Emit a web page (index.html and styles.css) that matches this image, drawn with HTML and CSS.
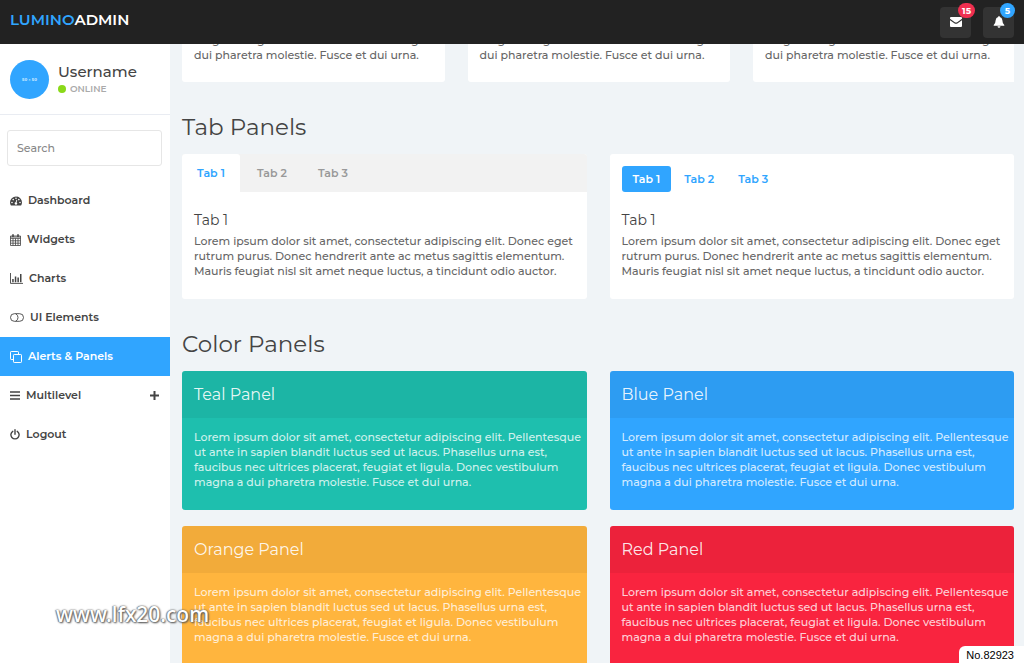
FILE: index.html
```html
<!DOCTYPE html>
<html lang="en">
<head>
  <meta charset="UTF-8">
  <meta name="viewport" content="width=device-width, initial-scale=1">
  <title>Lumino - Panels</title>
  <link rel="stylesheet" href="styles.css">
</head>
<body>

  <header class="navbar">
    <a class="brand" href="#"><span>LUMINO</span>ADMIN</a>
    <div class="nav-buttons">
      <button class="nav-btn" type="button" aria-label="Messages">
        <svg width="12" height="10" viewBox="0 0 12 10"><path fill="#fff" d="M1 0h10a1 1 0 0 1 1 1v.8L7.2 5.2q-1.2.8-2.4 0L0 1.800V1a1 1 0 0 1 1-1zM0 3.200l4.300 3q1.700 1 3.400 0l4.300-3V9a1 1 0 0 1-1 1H1a1 1 0 0 1-1-1z"/></svg>
        <span class="badge badge-red">15</span>
      </button>
      <button class="nav-btn" type="button" aria-label="Alerts">
        <svg width="12" height="12" viewBox="0 0 12 12"><path fill="#fff" d="M6 0q.8 0 .8.9 2.300.5 2.500 3.200.1 3.400 2 4.800v.8H.7v-.8q1.900-1.400 2-4.800Q2.900 1.400 5.200.9 5.200 0 6 0zM4.500 10.200h3Q7.300 11.700 6 11.700T4.500 10.200z"/></svg>
        <span class="badge badge-blue">5</span>
      </button>
    </div>
  </header>

  <div class="page">
    <aside class="sidebar">
      <div class="profile">
        <div class="avatar">50 × 50</div>
        <div>
          <div class="username">Username</div>
          <div class="status"><span class="dot"></span>ONLINE</div>
        </div>
      </div>
      <form class="search">
        <input type="text" placeholder="Search" aria-label="Search">
      </form>
      <nav class="menu">
        <a href="#">
          <svg width="12" height="10" viewBox="0 0 12 10"><path fill="currentColor" fill-rule="evenodd" d="M6 .5a6 6 0 0 1 6 6q0 1.700-.9 3H.9Q0 8.200 0 6.500a6 6 0 0 1 6-6zM1.200 6.500a.8.8 0 1 0 1.600 0a.8.8 0 1 0-1.600 0zM2.400 3.600a.8.8 0 1 0 1.600 0a.8.8 0 1 0-1.600 0zM5.200 2.300a.8.8 0 1 0 1.600 0a.8.8 0 1 0-1.600 0zM8 3.600a.8.8 0 1 0 1.600 0a.8.8 0 1 0-1.600 0zM9.200 6.500a.8.8 0 1 0 1.600 0a.8.8 0 1 0-1.600 0zM6.400 3.800L5.700 6.300a1.200 1.200 0 1 0 .9.200l.6-2.500z"/></svg>
          Dashboard
        </a>
        <a href="#">
          <svg width="11" height="12" viewBox="0 0 11 12"><g fill="none" stroke="currentColor" stroke-width=".8"><path d="M.5 2h10v9.500H.5zM.5 4.400h10M.5 6.800h10M.5 9.200h10M3 4.400v7M5.500 4.400v7M8 4.400v7"/><path stroke-width="1.600" d="M3 .3v2.700M8 .3v2.700"/><path d="M.5 3h10"/></g></svg>
          Widgets
        </a>
        <a href="#">
          <svg width="13" height="11" viewBox="0 0 13 11"><path fill="none" stroke="currentColor" stroke-width=".9" d="M.5 0v10.400H13"/><path fill="currentColor" d="M2.200 6h1.500v3.200H2.200zM4.800 3.500h1.500v5.700H4.800zM7.400 4.600h1.500v4.600H7.400zM10 1h1.500v8.200H10z"/></svg>
          Charts
        </a>
        <a href="#">
          <svg width="14" height="9" viewBox="0 0 14 9"><g fill="none" stroke="currentColor" stroke-width=".9"><rect x=".5" y=".7" width="13" height="7.600" rx="3.800"/><path d="M5.800.9Q8 2 8 4.500T5.800 8.100"/></g></svg>
          UI Elements
        </a>
        <a class="active" href="#">
          <svg width="12" height="12" viewBox="0 0 12 12"><g fill="none" stroke="currentColor"><rect x="3.500" y="3.500" width="8" height="8" rx=".7"/><path d="M3.500 8.500H1.200q-.7 0-.7-.7V1.200q0-.7.7-.7h6.600q.7 0 .7.700v2.300"/></g></svg>
          Alerts &amp; Panels
        </a>
        <a href="#">
          <svg width="10" height="9" viewBox="0 0 10 9"><path stroke="currentColor" stroke-width="1.500" d="M0 1h10M0 4.500h10M0 8h10"/></svg>
          Multilevel
          <svg class="plus" width="9" height="9" viewBox="0 0 9 9"><path stroke="currentColor" stroke-width="2" d="M4.500 0v9M0 4.500h9"/></svg>
        </a>
        <a href="#">
          <svg width="10" height="11" viewBox="0 0 10 11"><path fill="none" stroke="currentColor" stroke-width="1.400" stroke-linecap="round" d="M2.800 2.300a4.100 4.100 0 1 0 4.400 0M5 .8v4.400"/></svg>
          Logout
        </a>
      </nav>
    </aside>

    <main class="content">
      <div class="row row-three">
        <section class="card">
          <p>feugiat et ligula. Donec vestibulum magna<br>dui pharetra molestie. Fusce et dui urna.</p>
        </section>
        <section class="card">
          <p>feugiat et ligula. Donec vestibulum magna<br>dui pharetra molestie. Fusce et dui urna.</p>
        </section>
        <section class="card">
          <p>feugiat et ligula. Donec vestibulum magna<br>dui pharetra molestie. Fusce et dui urna.</p>
        </section>
      </div>

      <h2>Tab Panels</h2>
      <div class="row row-two">
        <section class="card tab-card">
          <div class="tabs">
            <button class="active" type="button">Tab 1</button>
            <button type="button">Tab 2</button>
            <button type="button">Tab 3</button>
          </div>
          <h4>Tab 1</h4>
          <p>Lorem ipsum dolor sit amet, consectetur adipiscing elit. Donec eget<br>rutrum purus. Donec hendrerit ante ac metus sagittis elementum.<br>Mauris feugiat nisl sit amet neque luctus, a tincidunt odio auctor.</p>
        </section>
        <section class="card tab-card">
          <div class="pills">
            <button class="active" type="button">Tab 1</button>
            <button type="button">Tab 2</button>
            <button type="button">Tab 3</button>
          </div>
          <h4>Tab 1</h4>
          <p>Lorem ipsum dolor sit amet, consectetur adipiscing elit. Donec eget<br>rutrum purus. Donec hendrerit ante ac metus sagittis elementum.<br>Mauris feugiat nisl sit amet neque luctus, a tincidunt odio auctor.</p>
        </section>
      </div>

      <h2>Color Panels</h2>
      <div class="row row-two">
        <section class="panel teal">
          <h3>Teal Panel</h3>
          <p>Lorem ipsum dolor sit amet, consectetur adipiscing elit. Pellentesque<br>ut ante in sapien blandit luctus sed ut lacus. Phasellus urna est,<br>faucibus nec ultrices placerat, feugiat et ligula. Donec vestibulum<br>magna a dui pharetra molestie. Fusce et dui urna.</p>
        </section>
        <section class="panel blue">
          <h3>Blue Panel</h3>
          <p>Lorem ipsum dolor sit amet, consectetur adipiscing elit. Pellentesque<br>ut ante in sapien blandit luctus sed ut lacus. Phasellus urna est,<br>faucibus nec ultrices placerat, feugiat et ligula. Donec vestibulum<br>magna a dui pharetra molestie. Fusce et dui urna.</p>
        </section>
        <section class="panel orange">
          <h3>Orange Panel</h3>
          <p>Lorem ipsum dolor sit amet, consectetur adipiscing elit. Pellentesque<br>ut ante in sapien blandit luctus sed ut lacus. Phasellus urna est,<br>faucibus nec ultrices placerat, feugiat et ligula. Donec vestibulum<br>magna a dui pharetra molestie. Fusce et dui urna.</p>
        </section>
        <section class="panel red">
          <h3>Red Panel</h3>
          <p>Lorem ipsum dolor sit amet, consectetur adipiscing elit. Pellentesque<br>ut ante in sapien blandit luctus sed ut lacus. Phasellus urna est,<br>faucibus nec ultrices placerat, feugiat et ligula. Donec vestibulum<br>magna a dui pharetra molestie. Fusce et dui urna.</p>
        </section>
      </div>
    </main>
  </div>

  <div class="watermark">www.lfx20.com</div>
  <div class="serial">No.82923</div>

</body>
</html>
```
FILE: styles.css
```css
* { box-sizing: border-box; }
body {
  margin: 0;
  height: 100vh;
  overflow: hidden;
  display: flex;
  flex-direction: column;
  background: #f0f4f7;
  color: #444;
  font-family: Montserrat, Inter, sans-serif;
  font-size: 11px;
  font-weight: 500;
  line-height: 15px;
}
h2, h3, h4, p { margin: 0; }
a { text-decoration: none; color: inherit; }
button { border: 0; background: none; font: inherit; color: inherit; cursor: pointer; }

/* Top bar */
.navbar {
  flex: none;
  height: 44px;
  padding: 0 10px;
  display: flex;
  justify-content: space-between;
  align-items: center;
  background: #222;
}
.brand { color: #fff; font-size: 15px; font-weight: 600; line-height: 20px; padding-bottom: 4px; }
.brand span { color: #30a5ff; }
.nav-buttons { display: flex; gap: 12px; }
.nav-btn {
  position: relative;
  width: 31px;
  height: 31px;
  padding: 0;
  border-radius: 4px;
  background: #333;
  display: flex;
  align-items: center;
  justify-content: center;
}
.badge {
  position: absolute;
  top: -4px;
  right: -4px;
  min-width: 15px;
  height: 15px;
  padding: 0 4px;
  border-radius: 8px;
  color: #fff;
  font-size: 9px;
  font-weight: 700;
}
.badge-red { background: #ef2f50; }
.badge-blue { background: #30a5ff; right: -1px; }

.page { flex: 1; min-height: 0; display: grid; grid-template-columns: 170px 1fr; }

/* Sidebar */
.sidebar { background: #fff; min-width: 0; }
.profile {
  display: flex;
  gap: 9px;
  align-items: center;
  height: 71px;
  padding-left: 10px;
  border-bottom: 1px solid #e9ecf2;
}
.avatar {
  width: 39px;
  height: 39px;
  border-radius: 50%;
  background: #30a5ff;
  color: #d8eeff;
  font-size: 4px;
  font-weight: 700;
  line-height: 40px;
  text-align: center;
}
.username { font-size: 15px; line-height: 20px; }
.status { display: flex; align-items: center; gap: 4px; color: #aaa; font-size: 9px; font-weight: 600; line-height: 14px; }
.dot { width: 8px; height: 8px; border-radius: 50%; background: #8ad919; }
.search { padding: 15px 8px 15px 7px; }
.search input {
  display: block;
  width: 100%;
  height: 36px;
  padding: 0 9px;
  border: 1px solid #e6e6e6;
  border-radius: 3px;
  font: inherit;
  background: #fff;
}
.search input::placeholder { color: #888; opacity: 1; }
.menu a {
  display: flex;
  align-items: center;
  gap: 6px;
  height: 39px;
  padding: 0 11px 0 10px;
  font-weight: 600;
}
.menu a.active { background: #30a5ff; color: #fff; }
.menu .plus { margin-left: auto; }

/* Content */
.content { min-width: 0; overflow: hidden; padding: 0 10px 0 12px; }
.content h2 { font-size: 23px; font-weight: 400; line-height: 30px; }
.content p { white-space: nowrap; }
.row { display: grid; column-gap: 23px; row-gap: 16px; margin-bottom: 30px; }
.row-two { grid-template-columns: 1fr 1fr; }
/* scrolled under the top bar, only the card bottoms show */
.row-three {
  grid-template-columns: 1fr 1fr 1fr;
  height: 38px;
  align-content: end;
  overflow: hidden;
}
.row + h2 { margin-bottom: 12px; }
.card { background: #fff; border-radius: 3px; color: #666; padding: 12px 12px 19px; }
.tab-card { padding: 0 0 20px; overflow: hidden; }
.tab-card h4 { padding: 18px 12px 4px; color: #444; font-size: 14px; font-weight: 400; line-height: 20px; }
.tab-card p { padding: 0 12px; }
.tabs { display: flex; gap: 3px; height: 38px; background: #f2f2f2; }
.tabs button { width: 58px; padding: 0; color: #999; font-weight: 600; }
.tabs .active { background: #fff; color: #30a5ff; border-radius: 3px 3px 0 0; }
.pills { display: flex; gap: 2px; height: 38px; padding: 12px 12px 0; }
.pills button { height: 26px; padding: 0 11px; border-radius: 3px; color: #30a5ff; font-weight: 600; }
.pills .active { background: #30a5ff; color: #fff; }

.panel { border-radius: 3px; overflow: hidden; color: rgba(255, 255, 255, .8); }
.panel h3 {
  padding: 13px 12px;
  background: rgba(0, 0, 0, .05);
  color: rgba(255, 255, 255, .9);
  font-size: 16px;
  font-weight: 400;
  line-height: 21px;
}
.panel p { padding: 12px 12px 20px; }
.teal { background: #1ebfae; }
.blue { background: #30a5ff; }
.orange { background: #ffb53e; }
.red { background: #f9243f; }

/* Overlays */
.watermark {
  position: absolute;
  left: 56px;
  bottom: 36px;
  color: #fff;
  font-family: "Noto Sans", sans-serif;
  font-size: 21px;
  line-height: 26px;
  text-shadow: 0 0 2px #555, 1px 1px 2px #555, -1px 0 1px #999;
}
.serial {
  position: absolute;
  right: 0;
  bottom: 0;
  padding: 2px 10px 0 7px;
  border-radius: 6px 0 0 0;
  background: #fff;
  color: #000;
  font-family: "Liberation Sans", Arial, sans-serif;
  font-weight: 400;
}
```
